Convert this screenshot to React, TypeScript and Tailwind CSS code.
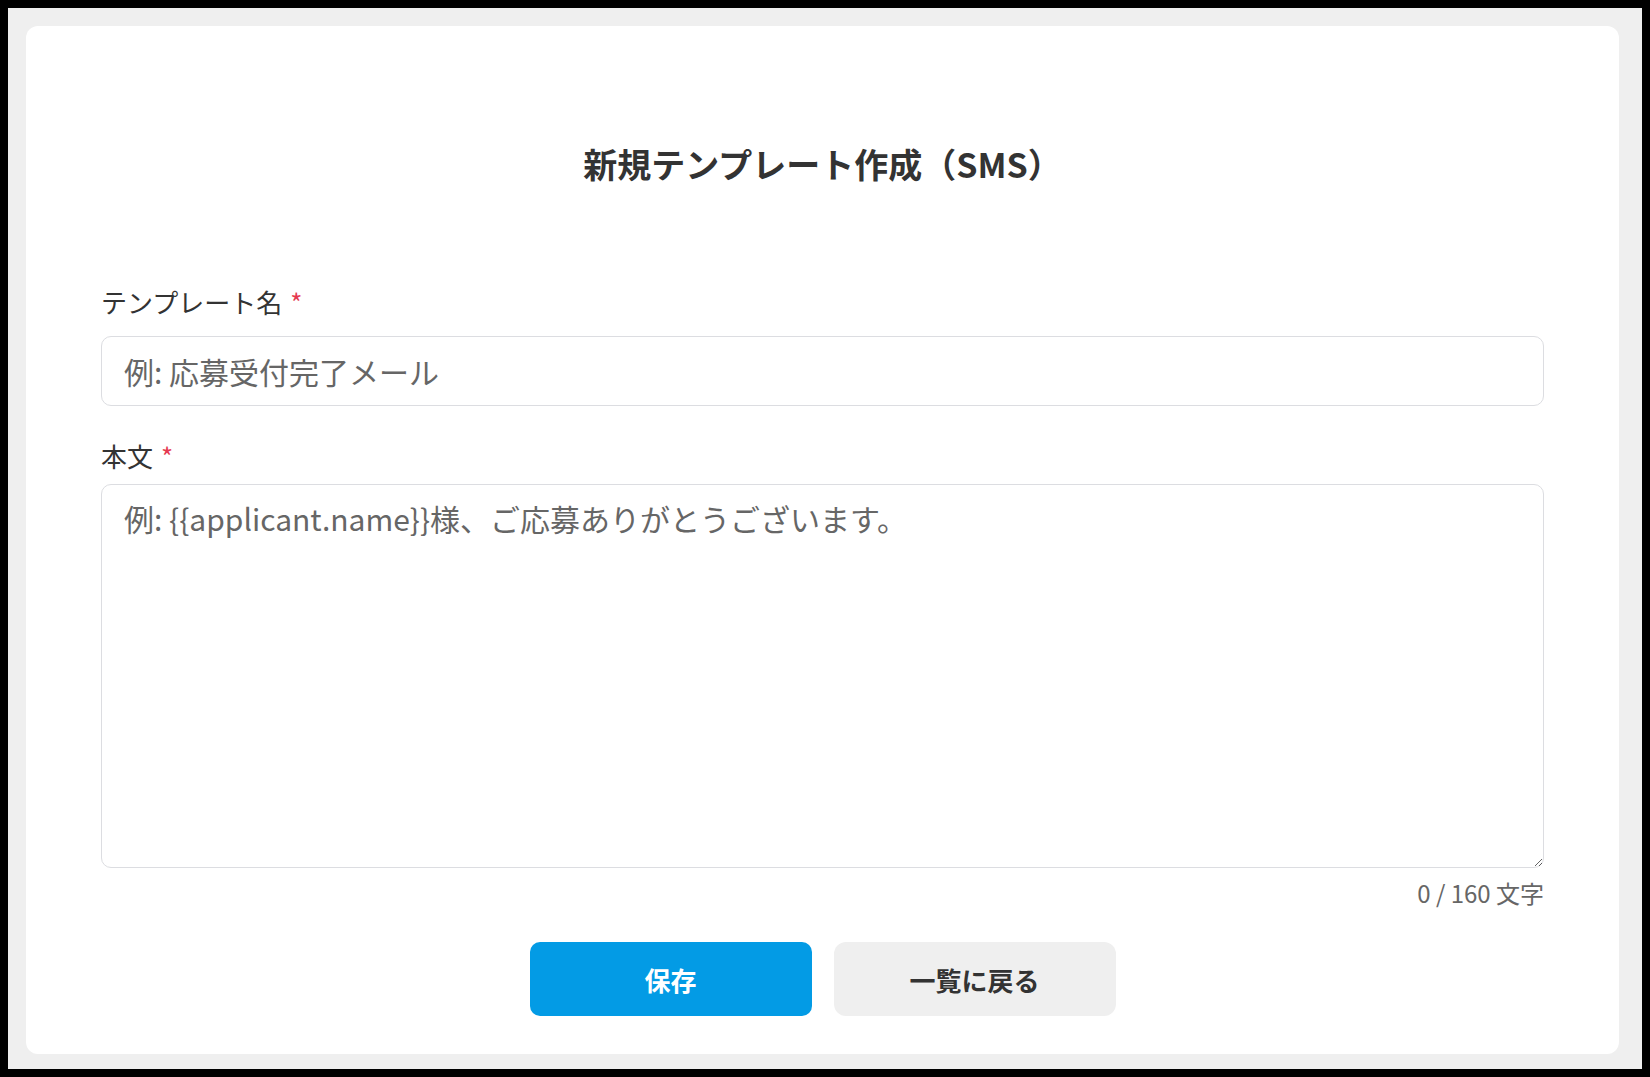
import React, { useState } from 'react';

const font = { fontFamily: '"Noto Sans CJK JP", "Noto Sans", sans-serif' };

const App = () => {
  const [name, setName] = useState('');
  const [body, setBody] = useState('');

  return (
    <div className="h-screen bg-black p-2 flex" style={font}>
      <div className="flex-1 flex bg-[#efefef] pt-[18px] pl-[18px] pr-[23px] pb-[15px]">
        <div className="flex-1 bg-white rounded-xl px-[75px] pt-[112px]">
          {/* Title */}
          <h1 className="text-center text-[34px] leading-[51px] font-bold text-[#333333]">
            新規テンプレート作成（SMS）
          </h1>

          {/* Template name */}
          <div className="mt-[93px]">
            <label className="block text-[26px] leading-[39px] text-[#333333]">
              テンプレート名
              <span className="ml-2 text-[#e53950]">*</span>
            </label>
            <input
              type="text"
              value={name}
              onChange={(e) => setName(e.target.value)}
              placeholder="例: 応募受付完了メール"
              className="mt-[15px] block w-full h-[70px] rounded-[10px] border border-[#dcdde1] bg-white pl-[22px] pr-4 text-[30px] text-[#333333] placeholder:text-[#666666] outline-none"
            />
          </div>

          {/* Body */}
          <div className="mt-[30px]">
            <label className="block text-[26px] leading-[39px] text-[#333333]">
              本文
              <span className="ml-2 text-[#e53950]">*</span>
            </label>
            <textarea
              value={body}
              onChange={(e) => setBody(e.target.value)}
              placeholder="例: {{applicant.name}}様、ご応募ありがとうございます。"
              className="mt-[9px] block w-full h-[384px] rounded-[10px] border border-[#dcdde1] bg-white pt-[11px] pl-[22px] pr-4 text-[30px] leading-[1.5] text-[#333333] placeholder:text-[#666666] outline-none resize-y"
            />
            <div className="mt-[7px] text-right text-[24px] leading-[1.5] text-[#666666]">
              {body.length} / 160 文字
            </div>
          </div>

          {/* Actions */}
          <div className="mt-[31px] flex justify-center gap-[22px]">
            <button className="w-[282px] h-[74px] rounded-[10px] bg-[#039be5] text-white text-[26px] font-bold">
              保存
            </button>
            <button className="w-[282px] h-[74px] rounded-[12px] bg-[#efefef] text-[#333333] text-[26px] font-bold">
              一覧に戻る
            </button>
          </div>
        </div>
      </div>
    </div>
  );
};

export default App;
